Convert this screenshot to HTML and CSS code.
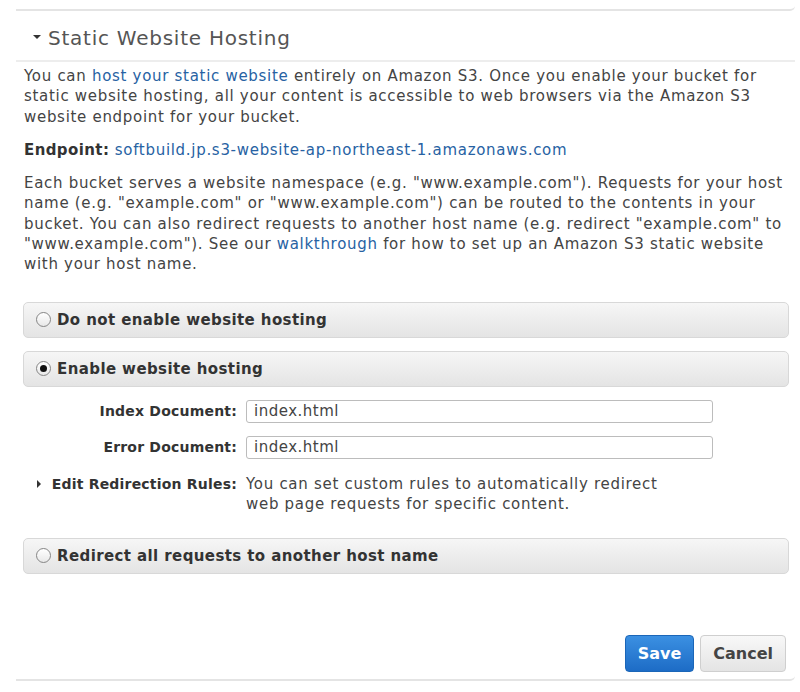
FILE: index.html
```html
<!DOCTYPE html>
<html lang="en">

<head>
    <meta charset="UTF-8" />
    <meta name="viewport" content="width=device-width, initial-scale=1.0" />
    <title>Static Website Hosting</title>
    <link rel="stylesheet" href="styles.css">
</head>

<body>
    <div class="prev-panel"></div>

    <div class="panel">
        <div class="panel-title">
            <span class="caret caret-down"></span>
            Static Website Hosting
        </div>

        <div class="panel-body">
            <p>You can <a href="#">host your static website</a> entirely on Amazon S3. Once you enable your bucket for
                static website hosting, all your content is accessible to web browsers via the Amazon S3 website
                endpoint for your bucket.</p>
            <p><b>Endpoint:</b> <a href="#">softbuild.jp.s3-website-ap-northeast-1.amazonaws.com</a></p>
            <p>Each bucket serves a website namespace (e.g. "www.example.com"). Requests for your host name (e.g.
                "example.com" or "www.example.com") can be routed to the contents in your bucket. You can also redirect
                requests to another host name (e.g. redirect "example.com" to "www.example.com"). See our
                <a href="#">walkthrough</a> for how to set up an Amazon S3 static website with your host name.</p>
        </div>

        <div class="options">
            <label class="option">
                <input type="radio" name="hosting" value="off">
                <span class="radio"></span>
                Do not enable website hosting
            </label>

            <label class="option">
                <input type="radio" name="hosting" value="on" checked>
                <span class="radio"></span>
                Enable website hosting
            </label>

            <div class="fields">
                <label class="field-label" for="index-doc">Index Document:</label>
                <input class="text-input" id="index-doc" type="text" value="index.html">

                <label class="field-label" for="error-doc">Error Document:</label>
                <input class="text-input" id="error-doc" type="text" value="index.html">

                <div class="field-label redirect-label"><span class="caret caret-right"></span>Edit Redirection Rules:</div>
                <div class="field-help">You can set custom rules to automatically redirect web page requests for specific content.</div>
            </div>

            <label class="option">
                <input type="radio" name="hosting" value="redirect">
                <span class="radio"></span>
                Redirect all requests to another host name
            </label>
        </div>

        <div class="actions">
            <button class="btn btn-primary">Save</button>
            <button class="btn">Cancel</button>
        </div>
    </div>
</body>

</html>
```

FILE: styles.css
```css
body {
    margin: 0;
    background-color: #ffffff;
    font-family: "DejaVu Sans", Verdana, sans-serif;
    font-size: 15px;
    letter-spacing: 0.7px;
    color: #444444;
}

a {
    color: #2762a3;
    text-decoration: none;
}

b {
    color: #333333;
    letter-spacing: 0.4px;
}

/* bottom edge of the panel above */
.prev-panel {
    height: 9px;
    margin: 0 5px 0 16px;
    border-bottom: 2px solid #e4e4e4;
    border-bottom-right-radius: 5px;
}

.panel {
    margin: 0 5px 0 16px;
    padding-bottom: 7px;
    border-bottom: 2px solid #e4e4e4;
    border-bottom-right-radius: 5px;
}

.panel-title {
    display: flex;
    align-items: center;
    gap: 7px;
    padding: 15px 0 10px 17px;
    line-height: 24px;
    font-size: 20px;
    letter-spacing: 0.75px;
    color: #555555;
    border-bottom: 2px solid #ededed;
}

.caret {
    display: inline-block;
    width: 0;
    height: 0;
}

.caret-down {
    border-left: 4px solid transparent;
    border-right: 4px solid transparent;
    border-top: 4px solid #333333;
    margin-bottom: 3px;
}

.caret-right {
    border-top: 4px solid transparent;
    border-bottom: 4px solid transparent;
    border-left: 4px solid #333333;
}

.panel-body {
    padding: 4px 8px 0 8px;
    line-height: 20.3px;
}

.panel-body p {
    margin: 0 0 13px 0;
}

.options {
    margin: 27px 6px 0 7px;
    display: flex;
    flex-direction: column;
    gap: 13px;
}

.option {
    display: flex;
    align-items: center;
    flex-shrink: 0;
    gap: 6px;
    height: 34px;
    padding-left: 12px;
    border: 1px solid #d8d8d8;
    border-radius: 5px;
    background: linear-gradient(#f6f6f6, #e4e4e4);
    font-weight: bold;
    letter-spacing: 0.4px;
    color: #333333;
    cursor: pointer;
}

.option input {
    display: none;
}

.radio {
    width: 13px;
    height: 13px;
    border: 1px solid #858585;
    border-radius: 50%;
    background: linear-gradient(#ffffff, #e8e8e8);
    display: flex;
    align-items: center;
    justify-content: center;
}

.option input:checked + .radio::after {
    content: "";
    width: 7px;
    height: 7px;
    border-radius: 50%;
    background-color: #111111;
}

.fields {
    display: grid;
    grid-template-columns: 213px 467px;
    column-gap: 9px;
    row-gap: 13px;
    align-items: center;
    margin: 0 0 11px -7px;
    padding-left: 8px;
}

.field-label {
    text-align: right;
    font-size: 14px;
    font-weight: bold;
    letter-spacing: 0.2px;
    color: #333333;
}

.text-input {
    box-sizing: border-box;
    height: 23px;
    padding: 0 7px;
    border: 1px solid #bcbcbc;
    border-radius: 3px;
    font-family: inherit;
    font-size: 15px;
    letter-spacing: 0.5px;
    color: #444444;
}

.redirect-label {
    align-self: start;
    display: flex;
    align-items: center;
    justify-content: flex-end;
    line-height: 20px;
    margin-top: 2px;
}

.redirect-label .caret {
    margin-right: 11px;
}

.field-help {
    align-self: start;
    max-width: 430px;
    line-height: 20px;
    margin-top: 2px;
}

.actions {
    display: flex;
    justify-content: flex-end;
    gap: 6px;
    margin-top: 61px;
    padding-right: 9px;
}

.btn {
    height: 37px;
    padding: 0 12px;
    border: 1px solid #cfcfcf;
    border-radius: 4px;
    background: linear-gradient(#f8f8f8, #e4e4e4);
    font-family: inherit;
    font-size: 16px;
    font-weight: bold;
    color: #444444;
    cursor: pointer;
}

.btn-primary {
    padding: 0 12px;
    border-color: #1b66b8;
    background: linear-gradient(#3b90e2, #1d6cc6);
    color: #ffffff;
}
```
